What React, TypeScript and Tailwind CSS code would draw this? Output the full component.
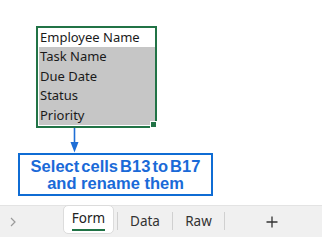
import React from 'react';

const fields = ['Task Name', 'Due Date', 'Status', 'Priority'];

function Chevron() {
    return (
        <svg width="6" height="10" viewBox="0 0 6 10" fill="none">
            <path d="M1 1l4 4-4 4" stroke="#9a9a9a" strokeWidth="1.2" />
        </svg>
    );
}

function Plus() {
    return (
        <svg width="12" height="12" viewBox="0 0 12 12" fill="none">
            <path d="M6 0.5v11M0.5 6h11" stroke="#333" strokeWidth="1.3" />
        </svg>
    );
}

export default function App() {
    return (
        <div className="w-[322px] h-[237px] bg-white flex flex-col overflow-hidden font-['Liberation_Sans',Arial,sans-serif]">
            <div className="flex-1 flex flex-col">
                {/* selected range */}
                <div className="mt-[26px] ml-[36px] w-[121px] border-2 border-[#217346] relative font-['Noto_Sans',sans-serif] text-[13px] text-[#1a1a1a]">
                    <div className="h-[19px] pl-[2px] leading-[19px] bg-white">
                        Employee Name
                    </div>
                    <div className="pl-px pb-px">
                        {fields.map((f) => (
                            <div key={f} className="h-[19.5px] pl-px bg-[#c6c6c6] leading-[19.5px]">
                                {f}
                            </div>
                        ))}
                    </div>
                    <div className="absolute -right-[2px] -bottom-[2px] w-[7px] h-[7px] bg-[#217346] border border-white" />
                </div>

                {/* arrow */}
                <svg className="ml-[70px]" width="9" height="25" viewBox="0 0 9 25" fill="none">
                    <path d="M4.5 0v16" stroke="#1f6fd6" strokeWidth="1.6" />
                    <path d="M0.5 14h8L4.5 24.5z" fill="#1f6fd6" />
                </svg>

                {/* callout */}
                <div className="ml-[18px] w-[195px] h-[43px] border-2 border-[#0f6cd4] flex flex-col items-center justify-center text-center font-bold text-[16.5px] leading-[17px] text-[#1a6ad8]">
                    <span className="[word-spacing:-2.5px]">Select cells B13 to B17</span>
                    <span>and rename them</span>
                </div>
            </div>

            {/* sheet tabs */}
            <div className="h-[32px] bg-[#f0f0f0] border-t border-[#e3e3e3] flex items-stretch font-['Noto_Sans',sans-serif] text-[13.5px] text-[#333]">
                <div className="w-[63px] flex items-center pl-[10px]">
                    <Chevron />
                </div>
                <div className="w-[51px] h-[29px] -mt-px bg-white rounded-[5px] border border-[#dcdcdc] flex flex-col items-center pt-[3px]">
                    <span className="leading-[19px] text-[#222]">Form</span>
                    <div className="w-[33px] h-[2px] bg-[#217346] mt-[1px]" />
                </div>
                <div className="w-[3px]" />
                <div className="w-px h-[18px] mt-[6px] bg-[#d0d0d0]" />
                <div className="w-[54px] flex items-center justify-center">Data</div>
                <div className="w-px h-[18px] mt-[6px] bg-[#d0d0d0]" />
                <div className="w-[51px] flex items-center justify-center">Raw</div>
                <div className="w-px h-[18px] mt-[6px] bg-[#d0d0d0]" />
                <div className="w-[94px] flex items-center justify-center">
                    <Plus />
                </div>
            </div>
        </div>
    );
}
